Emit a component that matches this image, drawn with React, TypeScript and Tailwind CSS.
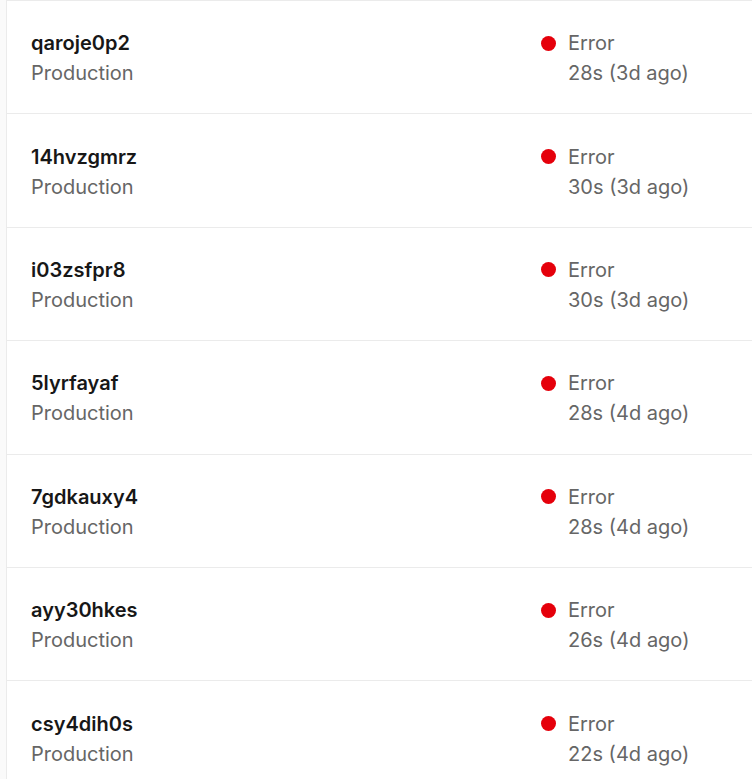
const deployments = [
  { id: 'qaroje0p2', duration: '28s', age: '3d' },
  { id: '14hvzgmrz', duration: '30s', age: '3d' },
  { id: 'i03zsfpr8', duration: '30s', age: '3d' },
  { id: '5lyrfayaf', duration: '28s', age: '4d' },
  { id: '7gdkauxy4', duration: '28s', age: '4d' },
  { id: 'ayy30hkes', duration: '26s', age: '4d' },
  { id: 'csy4dih0s', duration: '22s', age: '4d' },
]

export default function App() {
  return (
    <div className="min-h-screen bg-[#fafafa] pl-[6px] font-['Inter',sans-serif]">
      <div className="bg-white border-l border-t border-[#ebebeb] min-h-screen">
        {deployments.map(d => (
          <div
            key={d.id}
            className="h-[113.4px] border-b border-[#ebebeb] flex items-center pl-[24px] pt-[2px]"
          >
            <div className="w-[510px] flex flex-col">
              <span className="text-[20px] leading-[30px] font-semibold text-[#171717]">{d.id}</span>
              <span className="text-[20px] leading-[30px] text-[#666666]">Production</span>
            </div>
            <div className="flex flex-col">
              <div className="flex items-center gap-[12px]">
                <span className="w-[15px] h-[15px] rounded-full bg-[#e5000b]" />
                <span className="text-[20px] leading-[30px] text-[#666666]">Error</span>
              </div>
              <span className="pl-[27px] text-[20px] leading-[30px] text-[#666666]">
                {d.duration} ({d.age} ago)
              </span>
            </div>
          </div>
        ))}
      </div>
    </div>
  )
}
